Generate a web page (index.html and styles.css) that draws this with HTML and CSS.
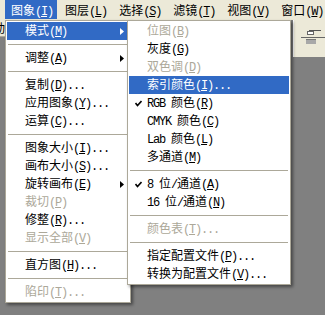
FILE: index.html
```html
<!DOCTYPE html>
<html lang="zh">
<head>
<meta charset="utf-8">
<link rel="stylesheet" href="styles.css">
</head>
<body>
<div class="screen">
  <div class="menubar">
    <div class="mb-item active">图象<span class="l">(<u>I</u>)</span></div>
    <div class="mb-item">图层<span class="l">(<u>L</u>)</span></div>
    <div class="mb-item">选择<span class="l">(<u>S</u>)</span></div>
    <div class="mb-item">滤镜<span class="l">(<u>T</u>)</span></div>
    <div class="mb-item">视图<span class="l">(<u>V</u>)</span></div>
    <div class="mb-item">窗口<span class="l">(<u>W</u>)</span></div>
  </div>
  <div class="optbar">
    <div class="opt-left"><span class="cut">动</span></div>
    <div class="opt-right">
      <svg width="26" height="16" viewBox="0 0 26 16">
        <rect x="8" y="0" width="12" height="1" fill="#555"/>
        <rect x="6.5" y="1.5" width="6" height="3" fill="#fff" stroke="#666" stroke-width="1"/>
        <rect x="0" y="7" width="26" height="1" fill="#666"/>
        <rect x="5" y="9" width="10" height="1" fill="#777"/>
        <rect x="5" y="10" width="10" height="4" fill="#a8a8a8"/>
      </svg>
    </div>
  </div>

  <div class="menu main">
    <div class="mi hi"><span class="ck"></span><span class="tx">模式<span class="l">(<u>M</u>)</span></span><span class="arrow"><svg width="4" height="7" viewBox="0 0 4 7"><path d="M0 0L4 3.5L0 7z" fill="#fff"/></svg></span></div>
    <div class="sep"></div>
    <div class="mi"><span class="ck"></span><span class="tx">调整<span class="l">(<u>A</u>)</span></span><span class="arrow"><svg width="4" height="7" viewBox="0 0 4 7"><path d="M0 0L4 3.5L0 7z" fill="#000"/></svg></span></div>
    <div class="sep"></div>
    <div class="mi"><span class="ck"></span><span class="tx">复制<span class="l">(<u>D</u>)...</span></span></div>
    <div class="mi"><span class="ck"></span><span class="tx">应用图象<span class="l">(<u>Y</u>)...</span></span></div>
    <div class="mi"><span class="ck"></span><span class="tx">运算<span class="l">(<u>C</u>)...</span></span></div>
    <div class="sep"></div>
    <div class="mi"><span class="ck"></span><span class="tx">图象大小<span class="l">(<u>I</u>)...</span></span></div>
    <div class="mi"><span class="ck"></span><span class="tx">画布大小<span class="l">(<u>S</u>)...</span></span></div>
    <div class="mi"><span class="ck"></span><span class="tx">旋转画布<span class="l">(<u>E</u>)</span></span><span class="arrow"><svg width="4" height="7" viewBox="0 0 4 7"><path d="M0 0L4 3.5L0 7z" fill="#000"/></svg></span></div>
    <div class="mi dis"><span class="ck"></span><span class="tx">裁切<span class="l">(<u>P</u>)</span></span></div>
    <div class="mi"><span class="ck"></span><span class="tx">修整<span class="l">(<u>R</u>)...</span></span></div>
    <div class="mi dis"><span class="ck"></span><span class="tx">显示全部<span class="l">(<u>V</u>)</span></span></div>
    <div class="sep"></div>
    <div class="mi"><span class="ck"></span><span class="tx">直方图<span class="l">(<u>H</u>)...</span></span></div>
    <div class="sep"></div>
    <div class="mi dis"><span class="ck"></span><span class="tx">陷印<span class="l">(<u>T</u>)...</span></span></div>
  </div>

  <div class="menu sub">
    <div class="mi dis"><span class="ck"></span><span class="tx">位图<span class="l">(<u>B</u>)</span></span></div>
    <div class="mi"><span class="ck"></span><span class="tx">灰度<span class="l">(<u>G</u>)</span></span></div>
    <div class="mi dis"><span class="ck"></span><span class="tx">双色调<span class="l">(<u>D</u>)</span></span></div>
    <div class="mi hi"><span class="ck"></span><span class="tx">索引颜色<span class="l">(<u>I</u>)...</span></span></div>
    <div class="mi"><span class="ck"><svg width="7" height="7" viewBox="0 0 7 7"><path d="M0.5 3 L2.5 5.5 L6.5 1" fill="none" stroke="#000" stroke-width="1.6"/></svg></span><span class="tx"><span class="l">RGB </span>颜色<span class="l">(<u>R</u>)</span></span></div>
    <div class="mi"><span class="ck"></span><span class="tx"><span class="l">CMYK </span>颜色<span class="l">(<u>C</u>)</span></span></div>
    <div class="mi"><span class="ck"></span><span class="tx"><span class="l">Lab </span>颜色<span class="l">(<u>L</u>)</span></span></div>
    <div class="mi"><span class="ck"></span><span class="tx">多通道<span class="l">(<u>M</u>)</span></span></div>
    <div class="sep"></div>
    <div class="mi"><span class="ck"><svg width="7" height="7" viewBox="0 0 7 7"><path d="M0.5 3 L2.5 5.5 L6.5 1" fill="none" stroke="#000" stroke-width="1.6"/></svg></span><span class="tx"><span class="l">8 </span>位<span class="l">/</span>通道<span class="l">(<u>A</u>)</span></span></div>
    <div class="mi"><span class="ck"></span><span class="tx"><span class="l">16 </span>位<span class="l">/</span>通道<span class="l">(<u>N</u>)</span></span></div>
    <div class="sep"></div>
    <div class="mi dis"><span class="ck"></span><span class="tx">颜色表<span class="l">(<u>T</u>)...</span></span></div>
    <div class="sep"></div>
    <div class="mi"><span class="ck"></span><span class="tx">指定配置文件<span class="l">(<u>P</u>)...</span></span></div>
    <div class="mi"><span class="ck"></span><span class="tx">转换为配置文件<span class="l">(<u>V</u>)...</span></span></div>
  </div>
</div>
</body>
</html>
```

FILE: styles.css
```css
html, body {
  margin: 0;
  padding: 0;
}
body {
  background: #808080;
  font-family: "Noto Sans CJK SC", "Liberation Sans", sans-serif;
  font-size: 12px;
  color: #000;
}
.screen {
  position: relative;
  width: 325px;
  height: 315px;
  overflow: hidden;
  background: #808080;
}
.l {
  font-family: "Liberation Mono", "DejaVu Sans Mono", monospace;
  font-size: 12px;
  letter-spacing: -1.2px;
}
u {
  text-decoration: underline;
  text-underline-offset: 1px;
}
.menubar {
  display: flex;
  height: 20px;
  padding-left: 5px;
  background: #ece9d8;
  white-space: nowrap;
  box-sizing: border-box;
}
.mb-item {
  height: 19px;
  line-height: 19px;
  padding: 0 6px;
  flex: none;
}
.mb-item.active {
  background: #316ac5;
  color: #fff;
  padding: 0 4px 0 6px;
  margin-right: 2px;
}
.optbar {
  display: flex;
  justify-content: space-between;
  align-items: flex-start;
}
.opt-left {
  width: 6px;
  height: 16px;
  background: #ece9d8;
  border-bottom: 1px solid #aca899;
  overflow: hidden;
  line-height: 16px;
  white-space: nowrap;
}
.cut {
  display: inline-block;
  margin-left: -7px;
}
.opt-right {
  width: 32px;
  height: 37px;
  background: #ece9d8;
  border-left: 1px solid #fff;
  box-sizing: border-box;
  padding: 10px 0 0 7px;
}
.opt-right svg {
  display: block;
}
.menu {
  position: absolute;
  top: 20px;
  background: #fff;
  border: 1px solid #aca899;
  padding: 1px;
  box-shadow: 2px 2px 3px rgba(0, 0, 0, 0.45);
}
.main {
  left: 5px;
  width: 122px;
}
.sub {
  left: 127px;
  width: 160px;
}
.mi {
  display: flex;
  align-items: center;
  height: 18px;
  line-height: 18px;
  white-space: pre;
}
.tx {
  white-space: pre;
}
.mi.hi {
  background: #316ac5;
  color: #fff;
}
.mi.dis {
  color: #aca899;
}
.ck {
  width: 18px;
  height: 18px;
  flex: none;
  display: flex;
  align-items: center;
  justify-content: center;
}
.ck svg, .arrow svg {
  display: block;
}
.arrow {
  margin-left: auto;
  margin-right: 5px;
}
.sep {
  height: 9px;
  display: flex;
  align-items: center;
  padding: 0 1px;
}
.sep::before {
  content: "";
  flex: 1;
  height: 1px;
  background: #aca899;
}
```
